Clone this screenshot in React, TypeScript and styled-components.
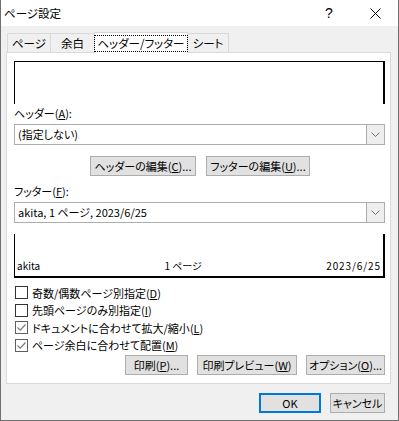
import React from 'react';
import styled, { createGlobalStyle } from 'styled-components';

const GlobalStyle = createGlobalStyle`
  html, body {
    margin: 0;
    padding: 0;
    background: #ffffff;
  }
  body {
    font-family: "Noto Sans CJK JP", "Noto Sans", sans-serif;
    font-size: 11px;
    color: #000000;
    font-feature-settings: "palt";
    white-space: nowrap;
  }
`;

const Window = styled.div`
  width: 399px;
  height: 421px;
  box-sizing: border-box;
  border: 1px solid #707070;
  border-top: none;
  background: #f0f0f0;
  display: flex;
  flex-direction: column;
`;

const TitleBar = styled.div`
  height: 26px;
  flex: none;
  background: #ffffff;
  display: flex;
  align-items: center;
`;

const Title = styled.div`
  flex: 1;
  padding-left: 3px;
  line-height: 26px;
  font-size: 11.5px;
`;

const CaptionButton = styled.div`
  width: 46px;
  height: 26px;
  display: flex;
  align-items: center;
  justify-content: center;
  font-family: "Liberation Sans", sans-serif;
  font-size: 14px;
`;

const Body = styled.div`
  flex: 1;
  display: flex;
  flex-direction: column;
  padding: 6px 7px 0 5px;
`;

const TabRow = styled.div`
  height: 20px;
  display: flex;
  align-items: flex-end;
  padding-left: 1px;
  position: relative;
  z-index: 1;
`;

const Tab = styled.div<{ $w: number; $active?: boolean }>`
  box-sizing: border-box;
  width: ${p => p.$w}px;
  height: ${p => (p.$active ? 21 : 19)}px;
  margin-right: -1px;
  margin-bottom: ${p => (p.$active ? -1 : 0)}px;
  border: 1px solid #d9d9d9;
  border-bottom: none;
  background: ${p => (p.$active ? '#ffffff' : '#f0f0f0')};
  position: relative;
  z-index: ${p => (p.$active ? 2 : 1)};
  display: flex;
  align-items: center;
  justify-content: center;
  line-height: 15px;
  font-size: 11.5px;
`;

const FocusText = styled.span`
  outline: 1px dotted #000000;
  outline-offset: 0;
  padding: 0 2px;
  margin-top: 1px;
`;

const Panel = styled.div`
  box-sizing: border-box;
  height: 332px;
  border: 1px solid #d9d9d9;
  background: #ffffff;
  display: flex;
  flex-direction: column;
  padding: 8px 5px 0 7px;
`;

const HeaderPreview = styled.div`
  box-sizing: border-box;
  height: 43px;
  border-top: 1px solid #000000;
  border-left: 1px solid #000000;
  border-right: 2px solid #000000;
`;

const FooterPreview = styled.div`
  box-sizing: border-box;
  height: 44px;
  margin-top: 11px;
  border-left: 1px solid #000000;
  border-right: 2px solid #000000;
  border-bottom: 2px solid #000000;
  display: flex;
  align-items: flex-end;
  justify-content: space-between;
  padding: 0 2px 4px 2px;
  font-size: 10px;
  line-height: 12px;
`;

const PreviewText = styled.span<{ $spaced?: boolean }>`
  letter-spacing: ${p => (p.$spaced ? '0.9px' : '0')};
`;

const FieldLabel = styled.div<{ $top?: number }>`
  height: 20px;
  line-height: 18px;
  margin-top: ${p => p.$top ?? 0}px;
`;

const Select = styled.div`
  box-sizing: border-box;
  height: 21px;
  border: 1px solid #adadad;
  display: flex;
  align-items: stretch;
`;

const SelectValue = styled.div`
  flex: 1;
  padding-left: 3px;
  line-height: 19px;
`;

const DropButton = styled.div`
  width: 17px;
  border-left: 1px solid #adadad;
  background: #eeeeee;
  display: flex;
  align-items: center;
  justify-content: center;
`;

const EditRow = styled.div`
  display: flex;
  justify-content: center;
  gap: 10px;
  margin-top: 11px;
  padding-left: 1px;
`;

const Button = styled.div<{ $w: number; $default?: boolean }>`
  box-sizing: border-box;
  width: ${p => p.$w}px;
  height: 20px;
  border: ${p => (p.$default ? '2px solid #0078d7' : '1px solid #adadad')};
  background: #e1e1e1;
  display: flex;
  align-items: center;
  justify-content: center;
  line-height: 16px;
`;

const CheckList = styled.div`
  margin-top: 6px;
  display: flex;
  flex-direction: column;
`;

const CheckRow = styled.div`
  height: 17.5px;
  display: flex;
  align-items: center;
`;

const Box = styled.div<{ $checked?: boolean }>`
  box-sizing: border-box;
  width: 13px;
  height: 13px;
  margin-left: 1px;
  margin-right: 4px;
  border: 1px solid ${p => (p.$checked ? '#5f5f5f' : '#333333')};
  background: #ffffff;
  display: flex;
  align-items: center;
  justify-content: center;
`;

const ActionRow = styled.div`
  display: flex;
  justify-content: flex-end;
  gap: 9px;
  margin-top: 1px;
`;

const DialogFooter = styled.div`
  display: flex;
  justify-content: flex-end;
  gap: 9px;
  margin-top: 9px;
  padding-right: 6px;
`;

const Chevron = () => (
  <svg width="9" height="5" viewBox="0 0 9 5">
    <path d="M0.5 0.5 L4.5 4.5 L8.5 0.5" fill="none" stroke="#707070" strokeWidth="1" />
  </svg>
);

const Check = () => (
  <svg width="11" height="11" viewBox="0 0 11 11">
    <path d="M1.5 5.5 L4.2 8.2 L9.5 2.5" fill="none" stroke="#7a7a7a" strokeWidth="1.2" />
  </svg>
);

const CloseIcon = () => (
  <svg width="11" height="11" viewBox="0 0 11 11">
    <path d="M0.5 0.5 L10.5 10.5 M10.5 0.5 L0.5 10.5" stroke="#000000" strokeWidth="1" />
  </svg>
);

const checks = [
  { label: '奇数/偶数ページ別指定', key: 'D', checked: false },
  { label: '先頭ページのみ別指定', key: 'I', checked: false },
  { label: 'ドキュメントに合わせて拡大/縮小', key: 'L', checked: true },
  { label: 'ページ余白に合わせて配置', key: 'M', checked: true },
];

export default function App() {
  return (
    <>
      <GlobalStyle />
      <Window>
        <TitleBar>
          <Title>ページ設定</Title>
          <CaptionButton>?</CaptionButton>
          <CaptionButton>
            <CloseIcon />
          </CaptionButton>
        </TitleBar>
        <Body>
          <TabRow>
            <Tab $w={44}>ページ</Tab>
            <Tab $w={45}>余白</Tab>
            <Tab $w={94} $active>
              <FocusText>ヘッダー/フッター</FocusText>
            </Tab>
            <Tab $w={42}>シート</Tab>
          </TabRow>
          <Panel>
            <HeaderPreview />
            <FieldLabel>
              ヘッダー(<u>A</u>):
            </FieldLabel>
            <Select>
              <SelectValue>(指定しない)</SelectValue>
              <DropButton>
                <Chevron />
              </DropButton>
            </Select>
            <EditRow>
              <Button $w={106}>
                ヘッダーの編集(<u>C</u>)...
              </Button>
              <Button $w={104}>
                フッターの編集(<u>U</u>)...
              </Button>
            </EditRow>
            <FieldLabel $top={6}>
              フッター(<u>F</u>):
            </FieldLabel>
            <Select>
              <SelectValue>akita, 1 ページ, 2023/6/25</SelectValue>
              <DropButton>
                <Chevron />
              </DropButton>
            </Select>
            <FooterPreview>
              <PreviewText>akita</PreviewText>
              <PreviewText>1 ページ</PreviewText>
              <PreviewText $spaced>2023/6/25</PreviewText>
            </FooterPreview>
            <CheckList>
              {checks.map(c => (
                <CheckRow key={c.key}>
                  <Box $checked={c.checked}>{c.checked && <Check />}</Box>
                  <span>
                    {c.label}(<u>{c.key}</u>)
                  </span>
                </CheckRow>
              ))}
            </CheckList>
            <ActionRow>
              <Button $w={63}>
                印刷(<u>P</u>)...
              </Button>
              <Button $w={100}>
                印刷プレビュー(<u>W</u>)
              </Button>
              <Button $w={79}>
                オプション(<u>O</u>)...
              </Button>
            </ActionRow>
          </Panel>
          <DialogFooter>
            <Button $w={62} $default>
              OK
            </Button>
            <Button $w={55}>キャンセル</Button>
          </DialogFooter>
        </Body>
      </Window>
    </>
  );
}
